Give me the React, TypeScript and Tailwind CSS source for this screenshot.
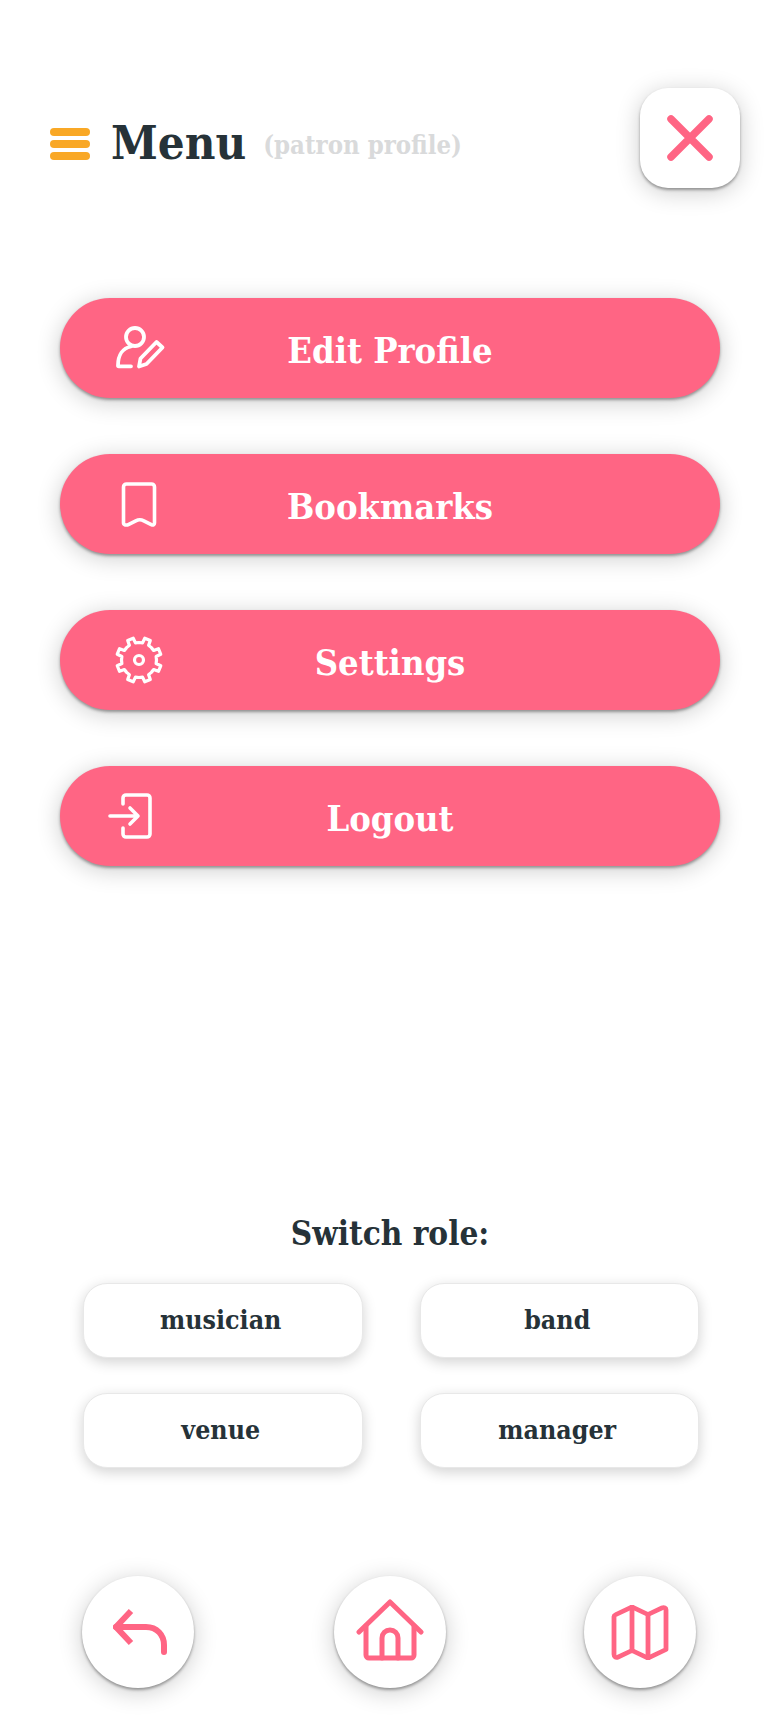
import React from 'react';

const menuShadow = 'shadow-[0_2px_3px_rgba(0,0,0,0.35),0_4px_24px_rgba(0,0,0,0.2)]';

// 8 tooth gear outline, easier to generate than to write out
const gearPoints = () => {
  const pts: string[] = [];
  const teeth = 8;
  for (let i = 0; i < teeth; i++) {
    const a = (i / teeth) * Math.PI * 2;
    const step = (Math.PI * 2) / teeth;
    const seq: [number, number][] = [
      [17.5, a - step * 0.5],
      [17.5, a - step * 0.24],
      [22.5, a - step * 0.17],
      [22.5, a + step * 0.17],
      [17.5, a + step * 0.24],
    ];
    seq.forEach(([r, t]) => pts.push(`${(26 + r * Math.cos(t)).toFixed(2)},${(26 + r * Math.sin(t)).toFixed(2)}`));
  }
  return pts.join(' ');
};

const EditIcon = () => (
  <svg width="52" height="52" viewBox="0 0 52 52" fill="none" stroke="#fff" strokeWidth="3.8" strokeLinecap="round" strokeLinejoin="round">
    <circle cx="21" cy="15" r="9" />
    <path d="M17 24.5C9 26 4 33 4 43.5c0 .5.3.8.8.8H17" />
    <path d="M25 44.5l1.5-8 16-16.5 6 5.5-16 16.5z" />
  </svg>
);

const BookmarkIcon = () => (
  <svg width="52" height="52" viewBox="0 0 52 52" fill="none" stroke="#fff" strokeWidth="3.6" strokeLinecap="round" strokeLinejoin="round">
    <path d="M13.5 6h25a3 3 0 0 1 3 3v36c0 2-1.5 2.5-3.2 1.6l-7.5-3.8c-3-1.5-5-1.5-8 0l-7.5 3.8c-1.8.9-4.8.4-4.8-1.6V9a3 3 0 0 1 3-3z" transform="translate(-1 0)" />
  </svg>
);

const GearIcon = () => (
  <svg className="-ml-px" width="52" height="52" viewBox="0 0 52 52" fill="none" stroke="#fff" strokeWidth="3.2" strokeLinecap="round" strokeLinejoin="round">
    <polygon points={gearPoints()} transform="rotate(-22.5 26 26)" />
    <circle cx="26" cy="26" r="4.5" />
  </svg>
);

const LogoutIcon = () => (
  <svg className="-ml-1 overflow-visible" width="52" height="52" viewBox="0 0 52 52" fill="none" stroke="#fff" strokeWidth="3.6" strokeLinecap="round" strokeLinejoin="round">
    <path d="M13 14v-6a3 3 0 0 1 3-3h21a3 3 0 0 1 3 3v36a3 3 0 0 1-3 3H16a3 3 0 0 1-3-3v-6" />
    <path d="M0 26h28M20 18l8 8-8 8" />
  </svg>
);

const menuItems = [
  { label: 'Edit Profile', icon: <EditIcon /> },
  { label: 'Bookmarks', icon: <BookmarkIcon /> },
  { label: 'Settings', icon: <GearIcon /> },
  { label: 'Logout', icon: <LogoutIcon /> },
];

const roles = ['musician', 'band', 'venue', 'manager'];

const App: React.FC = () => {
  return (
    <div className="w-[780px] h-[1730px] overflow-hidden bg-white text-[#263238] font-['DejaVu_Serif_Condensed','Liberation_Serif',serif]">
      {/* Header */}
      <header className="flex items-center justify-between pt-[88px] pl-[50px] pr-[40px]">
        <div className="flex items-center mt-[9px]">
          <div className="flex flex-col gap-1 w-10 mt-[3px]">
            <span className="h-2 rounded-full bg-[#F9A826]"></span>
            <span className="h-2 rounded-full bg-[#F9A826]"></span>
            <span className="h-2 rounded-full bg-[#F9A826]"></span>
          </div>
          <h1 className="ml-[21px] text-[47px] leading-none font-bold">Menu</h1>
          <span className="ml-[17px] mt-1.5 text-[25.5px] leading-none font-bold text-[#d9dadb]">(patron profile)</span>
        </div>
        <button className={`flex items-center justify-center w-[100px] h-[100px] rounded-[28px] bg-white ${menuShadow}`}>
          <svg width="46" height="46" viewBox="0 0 46 46" fill="none" stroke="#FF6584" strokeWidth="7.5" strokeLinecap="round">
            <path d="M4 4l38 38M42 4L4 42" />
          </svg>
        </button>
      </header>

      {/* Menu */}
      <nav className="flex flex-col gap-[56px] mt-[110px] px-[60px]">
        {menuItems.map(item => (
          <button
            key={item.label}
            className={`grid grid-cols-[1fr_auto_1fr] items-center h-[100px] rounded-full bg-[#FF6584] text-white ${menuShadow}`}
          >
            <span className="pl-[54px] flex">{item.icon}</span>
            <span className="text-[36px] leading-none font-bold pt-1">{item.label}</span>
            <span></span>
          </button>
        ))}
      </nav>

      {/* Switch role */}
      <section className="mt-[346px]">
        <h2 className="text-center text-[33px] leading-[44px] font-bold">Switch role:</h2>
        <div className="grid grid-cols-2 gap-x-[57px] gap-y-[35px] mt-[27px] pl-[83px] pr-[81px]">
          {roles.map(role => (
            <button
              key={role}
              className="h-[75px] pr-1 rounded-[24px] bg-white border border-[#e8e8e8] text-[26.5px] leading-none font-bold shadow-[0_4px_14px_rgba(0,0,0,0.18)]"
            >
              {role}
            </button>
          ))}
        </div>
      </section>

      {/* Bottom nav */}
      <footer className="flex mt-[108px] pl-[82px]">
        <button className={`flex items-center justify-center w-[112px] h-[112px] rounded-full bg-white ${menuShadow}`}>
          <svg className="ml-1" width="54" height="48" viewBox="0 0 54 48" fill="none" stroke="#FF6584" strokeWidth="6" strokeLinecap="round">
            <path d="M18 3L3 19l15 16" strokeLinecap="butt" />
            <path d="M3 19h30c11 0 18 8 18 18v7" />
          </svg>
        </button>
        <button className={`flex items-center justify-center ml-[140px] w-[112px] h-[112px] rounded-full bg-white ${menuShadow}`}>
          <svg className="-mt-1" width="68" height="62" viewBox="0 0 68 62" fill="none" stroke="#FF6584" strokeWidth="5" strokeLinecap="round" strokeLinejoin="round">
            <path d="M3 33L34 3l31 30" />
            <path d="M10 27v29a3 3 0 0 0 3 3h42a3 3 0 0 0 3-3V27" />
            <path d="M26 59V39a8 8 0 0 1 16 0v20" />
          </svg>
        </button>
        <button className={`flex items-center justify-center ml-[138px] w-[112px] h-[112px] rounded-full bg-white ${menuShadow}`}>
          <svg width="60" height="55" viewBox="0 0 60 58" preserveAspectRatio="none" fill="none" stroke="#FF6584" strokeWidth="4.8" strokeLinecap="round" strokeLinejoin="round">
            <path d="M4 12v40c0 3 2 4 4 3l14-7 16 8 18-9V5c0-2-2-3-4-2L38 10 22 2 6 10c-1 .5-2 1-2 2z" />
            <path d="M22 2v46M38 10v46" />
          </svg>
        </button>
      </footer>
    </div>
  );
};

export default App;
